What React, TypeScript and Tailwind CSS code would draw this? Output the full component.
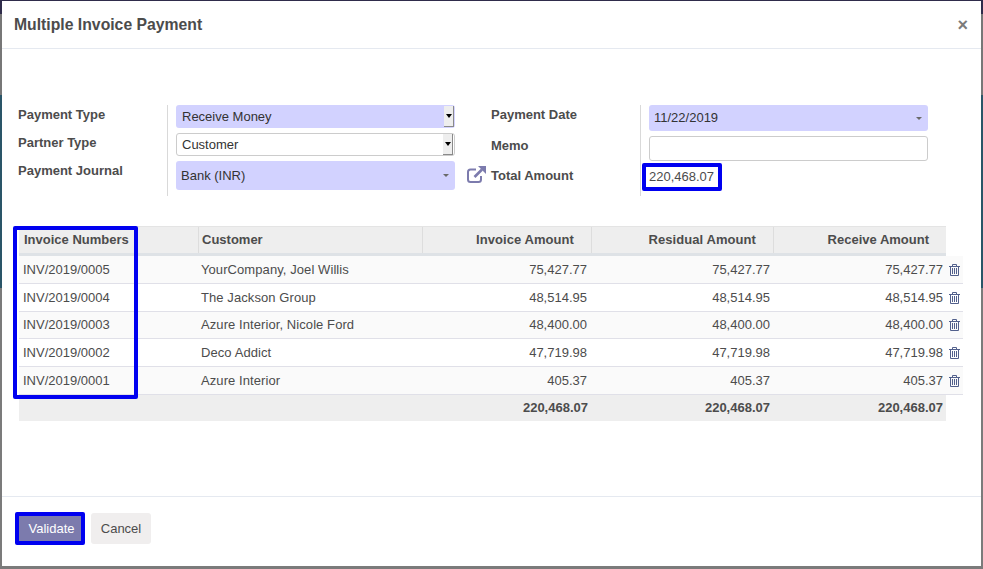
const labelClass = 'font-bold text-[13px] text-[#4c4c4c] leading-[18px]';

const rows = [
  { number: 'INV/2019/0005', customer: 'YourCompany, Joel Willis', amount: '75,427.77', h: 'h-[28px]', bg: 'bg-[#fafafa]' },
  { number: 'INV/2019/0004', customer: 'The Jackson Group', amount: '48,514.95', h: 'h-[28px]', bg: 'bg-white' },
  { number: 'INV/2019/0003', customer: 'Azure Interior, Nicole Ford', amount: '48,400.00', h: 'h-[27px]', bg: 'bg-[#fafafa]' },
  { number: 'INV/2019/0002', customer: 'Deco Addict', amount: '47,719.98', h: 'h-[28px]', bg: 'bg-white' },
  { number: 'INV/2019/0001', customer: 'Azure Interior', amount: '405.37', h: 'h-[28px]', bg: 'bg-[#fafafa]' },
];

const SelectArrows = () => (
  <div className="w-[10px] h-[21px] bg-[#eeeeee] border-r border-b border-[#8a8a8a] flex items-center justify-center mr-px">
    <div className="w-0 h-0 border-x-[3px] border-x-transparent border-t-[4px] border-t-black" />
  </div>
);

const Caret = () => <div className="w-0 h-0 border-x-[3px] border-x-transparent border-t-[3px] border-t-[#6a6a6a]" />;

const TrashIcon = () => (
  <svg width="11" height="12" viewBox="0 0 11 12" fill="none" stroke="#52608c" strokeWidth="1">
    <path d="M0 2.5h11M3.5 2.5V.5h4v2M1.5 2.5V11.5h8V2.5M3.5 4v6M5.5 4v6M7.5 4v6" />
  </svg>
);

const ExternalIcon = () => (
  <svg width="19" height="17" viewBox="0 0 19 17" fill="none" stroke="#7c7bad" strokeWidth="2">
    <path d="M9 3.5H3.5C2.1 3.5 1 4.6 1 6v7.5C1 14.9 2.1 16 3.5 16h8c1.4 0 2.5-1.1 2.5-2.5V10" />
    <path d="M7.5 11 15 3.5" strokeWidth="2.6" />
    <path d="M11 0h8v8z" fill="#7c7bad" stroke="none" />
  </svg>
);

export default function App() {
  return (
    <div className="w-[983px] h-[569px] overflow-hidden bg-[linear-gradient(to_bottom,#2f2c4b_0,#2f2c4b_14px,#777777_14px,#777777_95px,#2a5568_95px,#2a5568_288px,#7b7b7b_288px,#7b7b7b_100%)] pt-px pl-[2px] pr-[2px] pb-[3px] font-['Liberation_Sans',Arial,sans-serif] text-[13px] text-[#4c4c4c]">
      <div className="w-full h-full bg-white flex flex-col">
        <header className="h-[48px] shrink-0 border-b border-[#e5e9f0] flex items-center justify-between pl-[12px] pr-[13px]">
          <h4 className="font-bold text-[15.75px] text-[#4c4c4c]">Multiple Invoice Payment</h4>
          <span className="font-bold text-[18px] text-[#7b7b7b] leading-none">×</span>
        </header>

        <main className="flex-1 pl-[16px] relative">
          <div className="flex mt-[56px] h-[91px]">
            <div className="w-[149px] flex flex-col gap-[10px] pt-[1px]">
              <div className={labelClass}>Payment Type</div>
              <div className={labelClass}>Partner Type</div>
              <div className={labelClass}>Payment Journal</div>
            </div>
            <div className="w-[324px] border-l border-[#d9d9d9] pl-[8px] flex flex-col gap-[5px] items-start text-[#333333]">
              <div className="w-[279px] h-[23px] bg-[#d2d2ff] rounded-[3px] flex items-center justify-between pl-[6px]">
                <span>Receive Money</span>
                <SelectArrows />
              </div>
              <div className="w-[279px] h-[23px] bg-white border border-[#cccccc] rounded-[3px] flex items-center justify-between pl-[5px]">
                <span>Customer</span>
                <SelectArrows />
              </div>
              <div className="w-[279px] h-[29px] bg-[#d2d2ff] rounded-[3px] flex items-center justify-between pl-[5px] pr-[6px]">
                <span>Bank (INR)</span>
                <Caret />
              </div>
            </div>
            <div className="w-[149px] flex flex-col gap-[12px] pt-[1px]">
              <div className={labelClass}>Payment Date</div>
              <div className={`${labelClass} mt-px`}>Memo</div>
              <div className={labelClass}>Total Amount</div>
            </div>
            <div className="border-l border-[#d9d9d9] pl-[8px] flex flex-col gap-[5px] items-start">
              <div className="w-[279px] h-[26px] bg-[#d2d2ff] rounded-[3px] flex items-center justify-between pl-[5px] pr-[6px] text-[#333333]">
                <span>11/22/2019</span>
                <Caret />
              </div>
              <div className="w-[279px] h-[25px] bg-white border border-[#cccccc] rounded-[3px]" />
              <div className="-ml-[7px] -mt-[3px] w-[80px] h-[28px] border-[4px] border-[#0000f0] rounded-[2px] flex items-center pl-[3px]">220,468.07</div>
            </div>
          </div>
          <div className="absolute left-[465px] top-[117px]"><ExternalIcon /></div>

          <div className="mt-[30px] ml-px w-[944px] relative">
            <div className="flex h-[30px] w-[927px] bg-[#eeeeee] border-b-[3px] border-[#dee2e6] border-t border-t-[#e4e4e4] font-bold">
              <div className="w-[179px] pl-[5px] pb-px flex items-center">Invoice Numbers</div>
              <div className="w-[224px] border-l border-[#dddddd] pl-[3px] pb-px flex items-center">Customer</div>
              <div className="w-[169px] border-l border-[#dddddd] pr-[17px] pb-px flex items-center justify-end tracking-[0.07px]">Invoice Amount</div>
              <div className="w-[182px] border-l border-[#dddddd] pr-[17px] pb-px flex items-center justify-end tracking-[0.07px]">Residual Amount</div>
              <div className="flex-1 border-l border-[#dddddd] pr-[17px] pb-px flex items-center justify-end">Receive Amount</div>
            </div>
            {rows.map((row) => (
              <div key={row.number} className={`flex items-center ${row.h} ${row.bg} border-b border-[#e0e0e8]`}>
                <div className="w-[179px] pl-[4px]">{row.number}</div>
                <div className="w-[224px] pl-[3px] tracking-[0.08px]">{row.customer}</div>
                <div className="w-[169px] pr-[4px] text-right">{row.amount}</div>
                <div className="w-[182px] pr-[3px] text-right">{row.amount}</div>
                <div className="w-[172px] pr-[2px] text-right">{row.amount}</div>
                <div className="pl-[4px] flex items-center"><TrashIcon /></div>
              </div>
            ))}
            <div className="flex items-center h-[26px] w-[927px] bg-[#eeeeee] font-bold">
              <div className="w-[572px] text-right pr-[3px]">220,468.07</div>
              <div className="w-[182px] text-right pr-[3px]">220,468.07</div>
              <div className="w-[172px] text-right pr-[2px]">220,468.07</div>
            </div>
            <div className="absolute left-[-6px] top-[0px] w-[125px] h-[173px] border-[4px] border-[#0000f0] rounded-[2px]" />
          </div>
        </main>

        <footer className="h-[70px] shrink-0 border-t border-[#e5e9f0] flex items-start gap-[6px] pl-[13px] pt-[15px]">
          <div className="w-[70px] h-[33px] border-[4px] border-[#0000f0] rounded-[2px] bg-[#7c7bad] text-white flex items-center justify-center pl-[3px]">Validate</div>
          <div className="w-[60px] h-[31px] mt-px bg-[#f0eeee] rounded-[3px] flex items-center justify-center">Cancel</div>
        </footer>
      </div>
    </div>
  );
}
